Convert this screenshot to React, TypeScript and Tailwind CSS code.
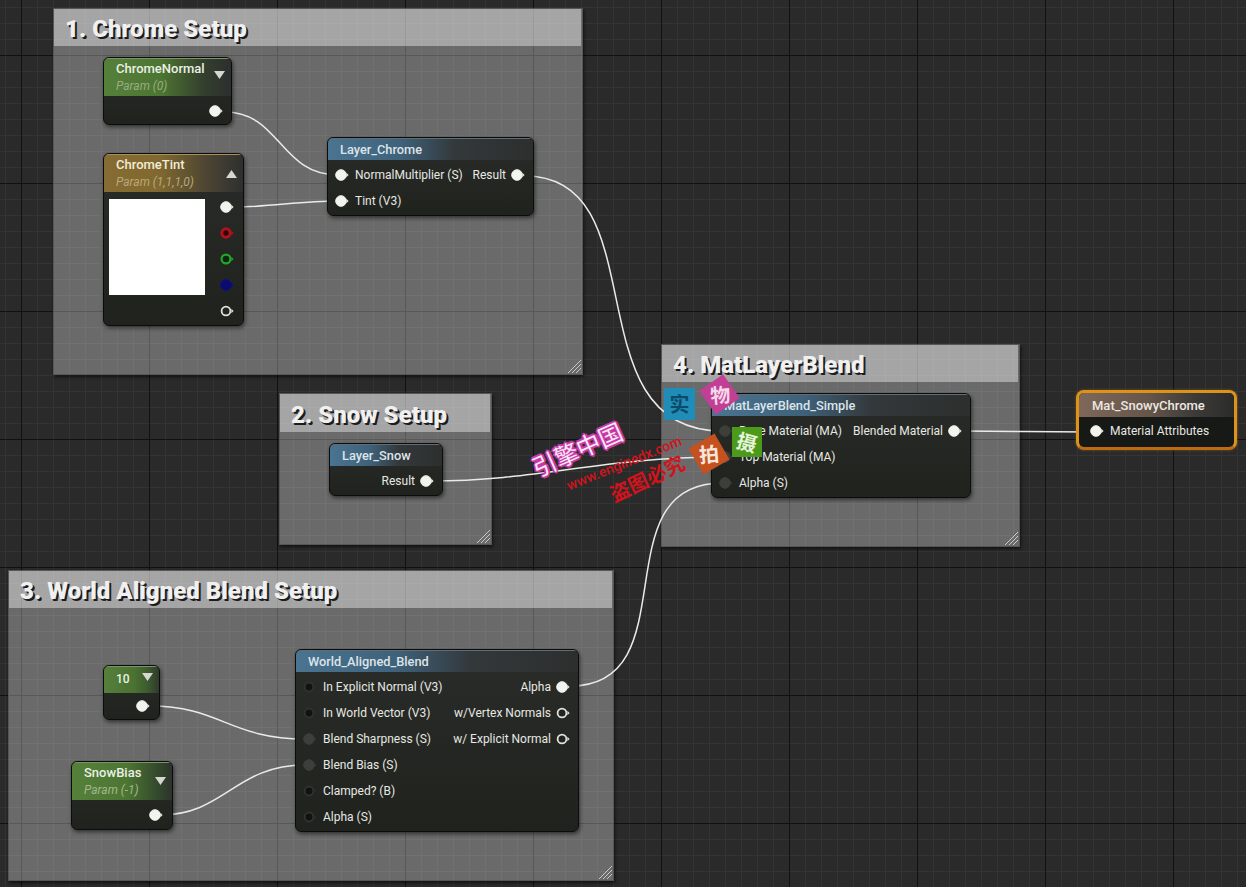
import type { ReactNode } from 'react'

type PinKind = 'on' | 'ring' | 'off' | 'dim' | 'red' | 'green' | 'blue'

const pinStyles: Record<PinKind, { fill: string; stroke: string; arrow: string; width: number; r: number }> = {
  on: { fill: '#f2f4ee', stroke: '#f2f4ee', arrow: '#e4e6e0', width: 1, r: 5.3 },
  ring: { fill: '#22241f', stroke: '#dfe1dc', arrow: '#dfe1dc', width: 1.8, r: 4.4 },
  off: { fill: '#111310', stroke: '#30322e', arrow: '#2a2c28', width: 2, r: 4.4 },
  dim: { fill: '#3d3f3b', stroke: '#3d3f3b', arrow: '#353733', width: 1, r: 5.3 },
  red: { fill: '#240a0c', stroke: '#b3101e', arrow: '#b3101e', width: 3, r: 4.2 },
  green: { fill: '#10240f', stroke: '#1fa82a', arrow: '#1fa82a', width: 2.2, r: 4.4 },
  blue: { fill: '#0a0a70', stroke: '#0c0c96', arrow: '#0c0c96', width: 1, r: 5.3 },
}

function Pin({ kind = 'on' }: { kind?: PinKind }) {
  const s = pinStyles[kind]
  return (
    <svg width="14" height="12" viewBox="0 0 14 12" className="shrink-0">
      <circle cx="6" cy="6" r={s.r} fill={s.fill} stroke={s.stroke} strokeWidth={s.width} />
      <polygon points="11.4,3.8 13.6,6 11.4,8.2" fill={s.arrow} />
    </svg>
  )
}

function Comment({ title, className, barClass }: { title: string; className: string; barClass: string }) {
  return (
    <div className={`absolute bg-white/30 border border-[#565656] shadow-[1px_2px_3px_rgba(0,0,0,0.6)] ${className}`}>
      <div className={`bg-white/40 flex items-center pl-[11px] pt-[3px] font-[Roboto,sans-serif] font-black text-2xl text-[#f0f0f0] [text-shadow:2px_2px_0_#1c1c1c] ${barClass}`}>
        {title}
      </div>
      <svg width="16" height="16" viewBox="0 0 16 16" className="absolute right-0 bottom-0 text-[#c8c8c8]">
        <path d="M2 15 L15 2 M6 15 L15 6 M10 15 L15 10" stroke="currentColor" strokeWidth="1" />
      </svg>
    </div>
  )
}

function Node({ className, children }: { className: string; children: ReactNode }) {
  return (
    <div className={`absolute rounded-md border border-[#0c0c0c] bg-[linear-gradient(180deg,#2a2c29,#20221e)] overflow-hidden shadow-[1px_2px_4px_rgba(0,0,0,0.55)] font-[Roboto,sans-serif] text-xs text-[#e6e8e2] ${className}`}>
      {children}
    </div>
  )
}

function FunctionHeader({ title }: { title: string }) {
  return (
    <div className="h-[22px] pl-3 flex items-center font-medium text-[12.8px] text-[#dde4e8] bg-[linear-gradient(90deg,#4a7491_0%,#3f627b_35%,#33383b_62%,#2d2f2e_100%)] border-t border-[#5f6d75]">
      {title}
    </div>
  )
}

function Row({ pin, label, right, rightPin = 'on' }: { pin?: PinKind; label?: string; right?: string; rightPin?: PinKind }) {
  return (
    <div className="h-[26px] flex items-center pl-[7px] pr-[8px] whitespace-nowrap">
      {pin && <Pin kind={pin} />}
      {label && <span className="ml-[6px]">{label}</span>}
      {right && (
        <>
          <span className="ml-auto mr-[5px]">{right}</span>
          <Pin kind={rightPin} />
        </>
      )}
    </div>
  )
}

function Triangle({ up, className = '' }: { up?: boolean; className?: string }) {
  return (
    <svg width="11" height="8" viewBox="0 0 11 8" className={`shrink-0 text-[#d4d8d0] ${className}`}>
      <polygon points={up ? '5.5,0 11,8 0,8' : '0,0 11,0 5.5,8'} fill="currentColor" />
    </svg>
  )
}

function Wires() {
  return (
    <svg width="1246" height="887" viewBox="0 0 1246 887" fill="none" className="absolute inset-0">
      <g stroke="#e9ebe6" strokeWidth="1.5">
        <path d="M225 112 C 280 112, 280 175, 338 175" />
        <path d="M235 207 C 270 207, 300 201, 338 201" />
        <path d="M525 176 C 660 176, 570 431, 722 431" />
        <path d="M430 481 C 540 481, 600 457, 722 457" />
        <path d="M570 686 C 690 686, 600 483, 722 483" />
        <path d="M960 431 C 1010 431, 1040 432, 1090 432" />
        <path d="M150 706 C 220 706, 230 739, 305 739" />
        <path d="M160 815 C 225 815, 235 765, 305 765" />
      </g>
    </svg>
  )
}

function Watermark() {
  return (
    <div className="font-['Noto_Sans_CJK_SC',sans-serif]">
      <div className="absolute left-[664px] top-[388px] w-[31px] h-[32px] bg-[#1f8db8] flex items-center justify-center text-xl font-bold text-[#0c4c68]">实</div>
      <div className="absolute left-[705px] top-[380px] w-[29px] h-[29px] bg-[#c23f96] flex items-center justify-center -rotate-[35deg]">
        <span className="text-xl font-bold text-[#f4d8ea] rotate-[30deg]">物</span>
      </div>
      <div className="absolute left-[694px] top-[439px] w-[30px] h-[30px] bg-[#c4511f] flex items-center justify-center -rotate-[30deg]">
        <span className="text-xl font-bold text-[#f8e6da] rotate-[25deg]">拍</span>
      </div>
      <div className="absolute left-[732px] top-[427px] w-[30px] h-[30px] bg-[#4c9a1c] flex items-center justify-center">
        <span className="text-xl font-bold text-[#e6f4da] rotate-[15deg]">摄</span>
      </div>
      <div className="absolute left-[525px] top-[434px] w-[104px] text-center text-2xl leading-[30px] whitespace-nowrap text-[#fbeaf6] -rotate-[24deg] [text-shadow:2px_0_0_#c93aa8,-2px_0_0_#c93aa8,0_2px_0_#c93aa8,0_-2px_0_#c93aa8,1px_1px_0_#c93aa8,-1px_-1px_0_#c93aa8,1px_-1px_0_#c93aa8,-1px_1px_0_#c93aa8]">引擎中国</div>
      <div className="absolute left-[559px] top-[455px] w-[130px] text-center font-[Roboto,sans-serif] text-[14px] leading-[16px] whitespace-nowrap font-medium text-[#d0141c] -rotate-[22deg]">www.enginedx.com</div>
      <div className="absolute left-[603px] top-[466px] w-[88px] text-center text-[20px] leading-[24px] whitespace-nowrap font-bold text-[#d0141c] -rotate-[25deg]">盗图必究</div>
    </div>
  )
}

export default function App() {
  return (
    <div className="relative w-[1246px] h-[887px] overflow-hidden bg-[#2a2a2a] bg-[image:linear-gradient(90deg,#111111_1px,transparent_1px),linear-gradient(180deg,#111111_1px,transparent_1px),linear-gradient(90deg,#343434_1px,transparent_1px),linear-gradient(180deg,#343434_1px,transparent_1px)] bg-[size:128px_128px,128px_128px,16px_16px,16px_16px] bg-[position:21px_0,0_55px,5px_0,0_7px]">
      <Comment title="1. Chrome Setup" className="left-[53px] top-[8px] w-[530px] h-[367px]" barClass="h-[37px] mr-[1px]" />
      <Comment title="2. Snow Setup" className="left-[279px] top-[393px] w-[213px] h-[152px]" barClass="h-[38px] mr-[1px]" />
      <Comment title="3. World Aligned Blend Setup" className="left-[8px] top-[570px] w-[606px] h-[311px]" barClass="h-[37px] mr-[1px]" />
      <Comment title="4. MatLayerBlend" className="left-[661px] top-[344px] w-[359px] h-[203px]" barClass="h-[37px] mr-[1px]" />

      <Wires />

      <Node className="left-[103px] top-[57px] w-[129px] h-[68px]">
        <div className="h-[38px] pl-3 pr-[6px] flex items-center justify-between bg-[linear-gradient(90deg,#55803a_0%,#4c7532_45%,#343f2e_78%,#2c2f2e_100%)] border-t border-[#7d9468]">
          <div>
            <div className="font-medium text-[13px] leading-[16px] text-[#eaf0e4]">ChromeNormal</div>
            <div className="italic leading-[18px] text-[#98ad80]">Param (0)</div>
          </div>
          <Triangle className="mb-[6px]" />
        </div>
        <div className="flex justify-end pt-[9px] pr-[8px]"><Pin /></div>
      </Node>

      <Node className="left-[103px] top-[153px] w-[141px] h-[173px]">
        <div className="h-[38px] pl-3 pr-[6px] flex items-center justify-between bg-[linear-gradient(90deg,#866c32_0%,#806830_40%,#4b4433_75%,#2e2f2e_100%)] border-t border-[#a8925c]">
          <div>
            <div className="font-medium text-[13px] leading-[16px] text-[#f2ecd8]">ChromeTint</div>
            <div className="italic leading-[18px] text-[#b8a878]">Param (1,1,1,0)</div>
          </div>
          <Triangle up />
        </div>
        <div className="flex justify-between pl-[5px] pr-[9px]">
          <div className="w-[96px] h-[96px] mt-[7px] bg-white" />
          <div className="flex flex-col">
            <div className="h-[26px] pt-[9px]"><Pin /></div>
            <div className="h-[26px] pt-[9px]"><Pin kind="red" /></div>
            <div className="h-[26px] pt-[9px]"><Pin kind="green" /></div>
            <div className="h-[26px] pt-[9px]"><Pin kind="blue" /></div>
            <div className="h-[26px] pt-[9px]"><Pin kind="ring" /></div>
          </div>
        </div>
      </Node>

      <Node className="left-[327px] top-[137px] w-[207px] h-[79px]">
        <FunctionHeader title="Layer_Chrome" />
        <div className="pt-[2px]">
          <Row pin="on" label="NormalMultiplier (S)" right="Result" />
          <Row pin="on" label="Tint (V3)" />
        </div>
      </Node>

      <Node className="left-[329px] top-[443px] w-[114px] h-[53px]">
        <FunctionHeader title="Layer_Snow" />
        <div className="pt-[2px]">
          <Row right="Result" />
        </div>
      </Node>

      <Node className="left-[711px] top-[393px] w-[260px] h-[105px]">
        <FunctionHeader title="MatLayerBlend_Simple" />
        <div className="pt-[2px]">
          <Row pin="dim" label="Base Material (MA)" right="Blended Material" />
          <Row pin="dim" label="Top Material (MA)" />
          <Row pin="dim" label="Alpha (S)" />
        </div>
      </Node>

      <div className="absolute left-[1076px] top-[390px] w-[161px] h-[60px] rounded-lg border-[3px] border-[#dc9318] border-b-[#bd6b12] shadow-[0_0_3px_rgba(255,170,40,0.35)] overflow-hidden bg-[#171916] font-[Roboto,sans-serif] text-xs text-[#e6e8e2]">
        <div className="h-[24px] pl-[13px] pt-[1px] flex items-center font-medium text-[13px] text-[#ece8e2] bg-[linear-gradient(90deg,#7e685a_0%,#66554a_45%,#3c3a38_75%,#2b2c2a_100%)]">Mat_SnowyChrome</div>
        <div className="h-[26px] mt-[1px] flex items-center pl-[11px] whitespace-nowrap">
          <Pin />
          <span className="ml-[6px]">Material Attributes</span>
        </div>
      </div>

      <Node className="left-[295px] top-[649px] w-[284px] h-[183px]">
        <FunctionHeader title="World_Aligned_Blend" />
        <div className="pt-[2px]">
          <Row pin="off" label="In Explicit Normal (V3)" right="Alpha" />
          <Row pin="off" label="In World Vector (V3)" right="w/Vertex Normals" rightPin="ring" />
          <Row pin="dim" label="Blend Sharpness (S)" right="w/ Explicit Normal" rightPin="ring" />
          <Row pin="dim" label="Blend Bias (S)" />
          <Row pin="off" label="Clamped? (B)" />
          <Row pin="off" label="Alpha (S)" />
        </div>
      </Node>

      <Node className="left-[103px] top-[665px] w-[57px] h-[55px]">
        <div className="h-[27px] pl-3 pr-[6px] pb-[3px] flex items-center justify-between bg-[linear-gradient(90deg,#55803a_0%,#4a7232_55%,#3c5a2e_80%,#2f3a2d_100%)] border-t border-[#7d9468]">
          <span className="font-medium text-[#eaf0e4]">10</span>
          <Triangle className="mb-[4px]" />
        </div>
        <div className="flex justify-end pt-[7px] pr-[9px]"><Pin /></div>
      </Node>

      <Node className="left-[71px] top-[761px] w-[102px] h-[69px]">
        <div className="h-[38px] pl-3 pr-[6px] flex items-center justify-between bg-[linear-gradient(90deg,#55803a_0%,#4c7532_55%,#344a2d_85%,#2e332c_100%)] border-t border-[#7d9468]">
          <div>
            <div className="font-medium text-[13px] leading-[16px] text-[#eaf0e4]">SnowBias</div>
            <div className="italic leading-[18px] text-[#a3b88c]">Param (-1)</div>
          </div>
          <Triangle className="mb-[2px]" />
        </div>
        <div className="flex justify-end pt-[9px] pr-[9px]"><Pin /></div>
      </Node>

      <Watermark />
    </div>
  )
}
